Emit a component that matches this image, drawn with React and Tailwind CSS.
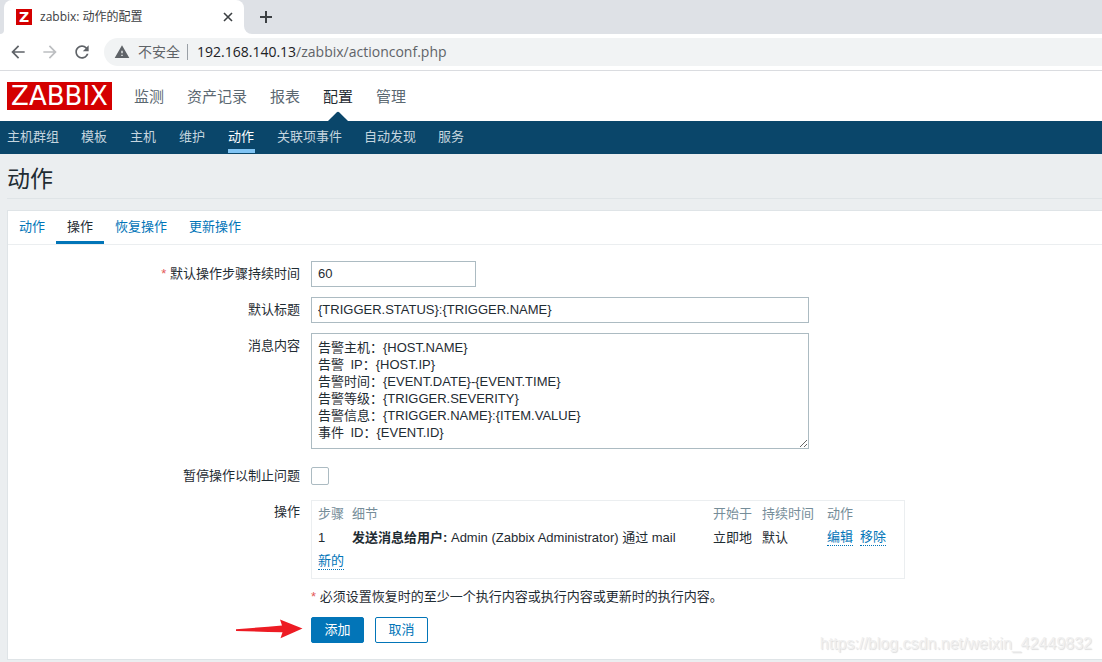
import React from "react";

const mainMenu = [
  { label: "监测" },
  { label: "资产记录" },
  { label: "报表" },
  { label: "配置", active: true },
  { label: "管理" },
];

const subMenu = [
  { label: "主机群组" },
  { label: "模板" },
  { label: "主机" },
  { label: "维护" },
  { label: "动作", active: true },
  { label: "关联项事件" },
  { label: "自动发现" },
  { label: "服务" },
];

const tabs = [
  { label: "动作" },
  { label: "操作", active: true },
  { label: "恢复操作" },
  { label: "更新操作" },
];

const message = `告警主机：{HOST.NAME}
告警\u2002IP：{HOST.IP}
告警时间：{EVENT.DATE}-{EVENT.TIME}
告警等级：{TRIGGER.SEVERITY}
告警信息：{TRIGGER.NAME}:{ITEM.VALUE}
事件\u2002ID：{EVENT.ID}`;

function BrowserChrome() {
  return (
    <div className="font-['Open_Sans','Noto_Sans_CJK_SC',sans-serif]">
      <div className="flex h-[34px] bg-[#dee1e6]">
        <div className="w-1 bg-white">
          <div className="h-full rounded-br-lg bg-[#dee1e6]" />
        </div>
        <div className="flex w-60 items-center rounded-t-lg bg-white pr-[10px] pl-3">
          <span className="flex size-4 items-center justify-center bg-[#d40000] font-['DejaVu_Sans',sans-serif] text-[14px] leading-none font-bold text-white">
            Z
          </span>
          <span className="ml-2 flex-1 text-xs text-[#3c4043]">zabbix: 动作的配置</span>
          <button type="button" aria-label="关闭标签页" className="text-[#3c4043]">
            <svg viewBox="0 0 12 12" className="size-3" fill="none" stroke="currentColor" strokeWidth="1.6">
              <path d="M2 2l8 8M10 2l-8 8" />
            </svg>
          </button>
        </div>
        <div className="flex-1 bg-white">
          <div className="flex h-full items-center rounded-bl-lg bg-[#dee1e6] pl-[15px]">
            <button type="button" aria-label="新标签页" className="text-[#3c4043]">
              <svg viewBox="0 0 14 14" className="size-[14px]" fill="none" stroke="currentColor" strokeWidth="2">
                <path d="M7 1v12M1 7h12" />
              </svg>
            </button>
          </div>
        </div>
      </div>
      <div className="flex h-[37px] items-center border-b border-[#dadce0] bg-white pl-2">
        <button type="button" aria-label="后退" className="mr-3 text-[#5f6368]">
          <svg viewBox="0 0 24 24" className="size-5" fill="currentColor">
            <path d="M20 11H7.83l5.59-5.59L12 4l-8 8 8 8 1.41-1.41L7.83 13H20v-2z" />
          </svg>
        </button>
        <button type="button" aria-label="前进" className="mr-3 text-[#bcbec1]">
          <svg viewBox="0 0 24 24" className="size-5" fill="currentColor">
            <path d="M12 4l-1.41 1.41L16.17 11H4v2h12.17l-5.58 5.59L12 20l8-8z" />
          </svg>
        </button>
        <button type="button" aria-label="重新加载" className="mr-3 text-[#5f6368]">
          <svg viewBox="0 0 24 24" className="size-5" fill="currentColor">
            <path d="M17.65 6.35C16.2 4.9 14.21 4 12 4c-4.42 0-7.99 3.58-7.99 8s3.57 8 7.99 8c3.73 0 6.84-2.55 7.73-6h-2.08c-.82 2.33-3.04 4-5.65 4-3.31 0-6-2.69-6-6s2.69-6 6-6c1.66 0 3.14.69 4.22 1.78L13 11h7V4l-2.35 2.35z" />
          </svg>
        </button>
        <div className="flex h-7 flex-1 items-center rounded-l-full bg-[#f1f3f4] pl-[10px] text-sm">
          <svg viewBox="0 0 24 24" className="size-4 text-[#5f6368]" fill="currentColor">
            <path d="M1 21h22L12 2 1 21zm12-3h-2v-2h2v2zm0-4h-2v-4h2v4z" />
          </svg>
          <span className="ml-2 text-[#5f6368]">不安全</span>
          <span className="ml-[7px] h-4 w-px bg-[#9aa0a6]" />
          <span className="ml-[9px] text-[#202124]">
            192.168.140.13<span className="text-[#5f6368]">/zabbix/actionconf.php</span>
          </span>
        </div>
      </div>
    </div>
  );
}

function Label({ htmlFor, required, children }) {
  return (
    <label htmlFor={htmlFor} className="text-right leading-[26px]">
      {required && <span className="text-[#e45959]">* </span>}
      {children}
    </label>
  );
}

function DottedLink({ children }) {
  return (
    <a href="#" className="border-b border-dotted border-[#0275b8] text-[#0275b8]">
      {children}
    </a>
  );
}

export default function App() {
  return (
    <div className="relative min-h-screen bg-[#ebeef0] font-['Liberation_Sans','Noto_Sans_CJK_SC',sans-serif] text-[13px] text-[#1f2c33]">
      <BrowserChrome />

      <header>
        <nav className="flex h-[50px] items-center bg-white pl-[7px]">
          <a
            href="#"
            className="flex h-7 w-[105px] items-center justify-center bg-[#d40000] font-['DejaVu_Sans',sans-serif] text-[26px] leading-none text-white"
          >
            ZABBIX
          </a>
          <ul className="ml-[22px] flex h-full gap-[23px] text-[15px]">
            {mainMenu.map((item) => (
              <li key={item.label} className="relative flex items-center pt-[2px]">
                <a href="#" className={item.active ? "text-[#1f2c33]" : "text-[#5b6871]"}>
                  {item.label}
                </a>
                {item.active && (
                  <svg
                    viewBox="0 0 20 10"
                    className="absolute bottom-0 left-1/2 h-[10px] w-5 -translate-x-1/2 fill-[#0a466a]"
                  >
                    <path d="M0 10L8.600 1.500Q10 .2 11.400 1.500L20 10z" />
                  </svg>
                )}
              </li>
            ))}
          </ul>
        </nav>
        <nav className="h-[33px] bg-[#0a466a] pl-[7px]">
          <ul className="flex gap-[22px]">
            {subMenu.map((item) => (
              <li key={item.label} className="min-w-[27px]">
                <a
                  href="#"
                  className={
                    item.active
                      ? "block h-8 border-b-4 border-[#80c4f4] leading-8 text-white"
                      : "block h-8 leading-8 text-[#c5d5df]"
                  }
                >
                  {item.label}
                </a>
              </li>
            ))}
          </ul>
        </nav>
      </header>

      <main className="pl-[7px]">
        <h1 className="mb-[11px] h-[45px] border-b border-[#dfe4e7] pt-[5px] text-[23px] leading-10">动作</h1>

        <section className="border-y border-l border-[#dfe4e7] bg-white pb-4">
          <ul className="flex h-[34px] border-b border-[#ebeef0]">
            {tabs.map((tab) => (
              <li key={tab.label}>
                <a
                  href="#"
                  className={
                    tab.active
                      ? "block h-[33px] border-b-[3px] border-[#0275b8] px-[11px] leading-8 text-[#1f2c33]"
                      : "block h-[33px] px-[11px] leading-8 text-[#0275b8]"
                  }
                >
                  {tab.label}
                </a>
              </li>
            ))}
          </ul>

          <form className="mt-4 grid grid-cols-[292px_minmax(0,1fr)] gap-x-[11px] gap-y-[10px]">
            <Label htmlFor="duration" required>
              默认操作步骤持续时间
            </Label>
            <input
              id="duration"
              type="text"
              defaultValue="60"
              className="h-[26px] w-[165px] border border-[#acbbc2] bg-white px-[6px] pb-[2px]"
            />

            <Label htmlFor="subject">默认标题</Label>
            <input
              id="subject"
              type="text"
              defaultValue="{TRIGGER.STATUS}:{TRIGGER.NAME}"
              className="h-[26px] w-full max-w-[498px] border border-[#acbbc2] bg-white px-[6px] pb-[2px]"
            />

            <Label htmlFor="message">消息内容</Label>
            <div className="pb-1">
              <textarea
                id="message"
                defaultValue={message}
                className="block h-[116px] w-full max-w-[498px] resize border border-[#acbbc2] bg-white px-[6px] py-[5px] leading-[17px]"
              />
            </div>

            <Label htmlFor="pause">暂停操作以制止问题</Label>
            <div className="flex items-center">
              <input
                id="pause"
                type="checkbox"
                className="size-[18px] appearance-none rounded-xs border border-[#acbbc2] bg-white checked:bg-[#0275b8]"
              />
            </div>

            <div className="text-right leading-[26px]">操作</div>
            <div>
              <div className="mt-px w-full max-w-[594px] border border-[#ebeef0] px-[6px] pb-[5px]">
                <table className="w-full table-fixed text-left leading-[17px]">
                  <colgroup>
                    <col className="w-[34px]" />
                    <col />
                    <col className="w-[49px]" />
                    <col className="w-[65px]" />
                    <col className="w-[71px]" />
                  </colgroup>
                  <thead>
                    <tr className="h-6 text-[#768d99]">
                      <th className="font-normal">步骤</th>
                      <th className="font-normal">细节</th>
                      <th className="font-normal">开始于</th>
                      <th className="font-normal">持续时间</th>
                      <th className="font-normal">动作</th>
                    </tr>
                  </thead>
                  <tbody>
                    <tr className="h-6">
                      <td>1</td>
                      <td>
                        <b>发送消息给用户:</b> Admin (Zabbix Administrator) 通过 mail
                      </td>
                      <td>立即地</td>
                      <td>默认</td>
                      <td>
                        <span className="flex gap-[7px]">
                          <DottedLink>编辑</DottedLink>
                          <DottedLink>移除</DottedLink>
                        </span>
                      </td>
                    </tr>
                    <tr className="h-6">
                      <td colSpan={5}>
                        <span className="flex">
                          <DottedLink>新的</DottedLink>
                        </span>
                      </td>
                    </tr>
                  </tbody>
                </table>
              </div>
              <p className="mt-[10px] leading-4">
                <span className="text-[#e45959]">* </span>
                必须设置恢复时的至少一个执行内容或执行内容或更新时的执行内容。
              </p>
              <div className="relative mt-3 flex gap-[11px]">
                <svg
                  viewBox="0 0 68 20"
                  className="absolute top-[2px] right-full mr-2 h-5 w-[68px] fill-[#ed1c24]"
                  aria-hidden="true"
                >
                  <path d="M1 10.300Q24 8.500 47 6.500L45 .4L67.500 9.600L45.500 19.300L47.500 13.300Q24 12.500 1 11.900z" />
                </svg>
                <button
                  type="button"
                  className="h-[26px] w-[53px] rounded-xs border border-[#0275b8] bg-[#0275b8] text-white"
                >
                  添加
                </button>
                <button
                  type="button"
                  className="h-[26px] w-[53px] rounded-xs border border-[#0275b8] bg-white text-[#0275b8]"
                >
                  取消
                </button>
              </div>
            </div>
          </form>
        </section>
      </main>

      <div className="pointer-events-none absolute right-[10px] bottom-2 text-base leading-5 text-[#f0f0f0] [text-shadow:1px_1px_1px_#dddddd]">
        https://blog.csdn.net/weixin_42449832
      </div>
    </div>
  );
}
